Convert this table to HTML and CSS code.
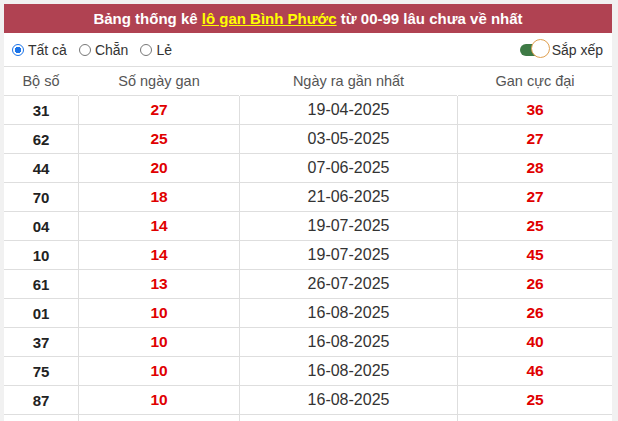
FILE: index.html
```html
<!DOCTYPE html>
<html lang="vi">
<head>
<meta charset="utf-8">
<link rel="stylesheet" href="styles.css">
</head>
<body>
<div class="panel">
  <div class="title">Bảng thống kê <a href="#" class="hl">lô gan Bình Phước</a> từ 00-99 lâu chưa về nhất</div>
  <div class="controls">
    <div class="radios">
      <label class="radio"><span class="dot on"></span>Tất cả</label>
      <label class="radio"><span class="dot"></span>Chẵn</label>
      <label class="radio"><span class="dot"></span>Lẻ</label>
    </div>
    <div class="sort"><span class="toggle"><span class="knob"></span></span>Sắp xếp</div>
  </div>
  <table class="tbl">
    <thead>
      <tr><th class="c1">Bộ số</th><th class="c2">Số ngày gan</th><th class="c3">Ngày ra gần nhất</th><th class="c4">Gan cực đại</th></tr>
    </thead>
    <tbody>
      <tr><td class="num">31</td><td class="red">27</td><td class="date">19-04-2025</td><td class="red">36</td></tr>
      <tr><td class="num">62</td><td class="red">25</td><td class="date">03-05-2025</td><td class="red">27</td></tr>
      <tr><td class="num">44</td><td class="red">20</td><td class="date">07-06-2025</td><td class="red">28</td></tr>
      <tr><td class="num">70</td><td class="red">18</td><td class="date">21-06-2025</td><td class="red">27</td></tr>
      <tr><td class="num">04</td><td class="red">14</td><td class="date">19-07-2025</td><td class="red">25</td></tr>
      <tr><td class="num">10</td><td class="red">14</td><td class="date">19-07-2025</td><td class="red">45</td></tr>
      <tr><td class="num">61</td><td class="red">13</td><td class="date">26-07-2025</td><td class="red">26</td></tr>
      <tr><td class="num">01</td><td class="red">10</td><td class="date">16-08-2025</td><td class="red">26</td></tr>
      <tr><td class="num">37</td><td class="red">10</td><td class="date">16-08-2025</td><td class="red">40</td></tr>
      <tr><td class="num">75</td><td class="red">10</td><td class="date">16-08-2025</td><td class="red">46</td></tr>
      <tr><td class="num">87</td><td class="red">10</td><td class="date">16-08-2025</td><td class="red">25</td></tr>
      <tr><td class="num"></td><td class="red"></td><td class="date"></td><td class="red"></td></tr>
    </tbody>
  </table>
</div>
</body>
</html>
```
FILE: styles.css
```css
html, body {
  margin: 0;
  padding: 0;
}
body {
  background: #f1f1f1;
  font-family: "Liberation Sans", Arial, sans-serif;
  color: #333;
}
.panel {
  margin: 4px 6px 0 4px;
  background: #fff;
}
.title {
  background: #b04252;
  color: #fff;
  font-weight: bold;
  font-size: 15px;
  text-align: center;
  height: 29px;
  line-height: 29px;
}
.hl {
  color: #ffff00;
  text-decoration: underline;
}
.controls {
  height: 33px;
  display: flex;
  align-items: center;
  justify-content: space-between;
  padding: 0 9px 0 8px;
  font-size: 14px;
  color: #333;
}
.radios {
  display: flex;
  gap: 12px;
}
.radio {
  display: flex;
  align-items: center;
  gap: 4px;
}
.dot {
  width: 12px;
  height: 12px;
  border: 1px solid #777;
  border-radius: 50%;
  box-sizing: border-box;
  background: #fff;
}
.dot.on {
  border: 1px solid #1a73e8;
  background: radial-gradient(circle, #1a73e8 0 3px, #fff 3.5px);
}
.sort {
  display: flex;
  align-items: center;
  gap: 2px;
}
.toggle {
  position: relative;
  width: 28px;
  height: 12px;
  border-radius: 6px;
  background: #3e7a45;
  margin-right: 2px;
}
.knob {
  position: absolute;
  right: -2px;
  top: -5px;
  width: 19px;
  height: 19px;
  border-radius: 50%;
  background: #fff;
  border: 1px solid #e0a050;
  box-sizing: border-box;
}
.tbl {
  width: 100%;
  border-collapse: collapse;
  table-layout: fixed;
}
.tbl th, .tbl td {
  border-top: 1px solid #dedede;
  border-left: 1px solid #dedede;
  text-align: center;
  height: 28px;
  padding: 0;
}
.tbl th:first-child, .tbl td:first-child {
  border-left: none;
}
.tbl th {
  font-weight: normal;
  font-size: 14.5px;
  color: #555;
  border-left-color: transparent;
}
.c1 { width: 74px; }
.c2 { width: 160px; }
.c3 { width: 217px; }
.c4 { width: auto; }
.num {
  font-weight: bold;
  font-size: 15px;
  color: #222;
}
.red {
  font-weight: bold;
  font-size: 15.5px;
  color: #e00000;
}
.date {
  font-size: 16px;
  color: #333;
}
```
